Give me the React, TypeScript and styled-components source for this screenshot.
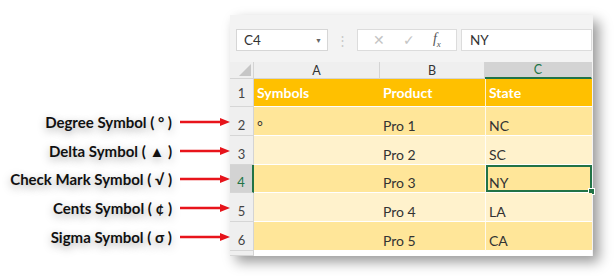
import styled, { createGlobalStyle } from "styled-components";

const GlobalStyle = createGlobalStyle`
  html, body {
    margin: 0;
    padding: 0;
    background: #ffffff;
  }
  body {
    font-family: Lato, "Liberation Sans", sans-serif;
  }
`;

const ROWS = [28, 29, 29, 28, 29, 29];

const labels = [
  "Degree Symbol ( ° )",
  "Delta Symbol ( ▲ )",
  "Check Mark Symbol ( √ )",
  "Cents Symbol ( ¢ )",
  "Sigma Symbol ( σ )",
];

const data = [
  { a: "Symbols", b: "Product", c: "State" },
  { a: "°", b: "Pro 1", c: "NC" },
  { a: "", b: "Pro 2", c: "SC" },
  { a: "", b: "Pro 3", c: "NY" },
  { a: "", b: "Pro 4", c: "LA" },
  { a: "", b: "Pro 5", c: "CA" },
];

function Arrow() {
  return (
    <svg width="50" height="10" viewBox="0 0 50 10">
      <line x1="0" y1="5" x2="42" y2="5" stroke="#e8141b" strokeWidth="2.4" />
      <polygon points="40,1 50,5 40,9" fill="#e8141b" />
    </svg>
  );
}

export default function App() {
  return (
    <Page>
      <GlobalStyle />
      <Labels>
        {labels.map((text, i) => (
          <LabelRow key={text} h={ROWS[i + 1]}>
            <LabelText>{text}</LabelText>
            <Arrow />
          </LabelRow>
        ))}
      </Labels>
      <Window>
        <FormulaBar>
          <NameBox>
            <span>C4</span>
            <Caret>▼</Caret>
          </NameBox>
          <Grip>⋮</Grip>
          <ButtonBox>
            <ToolGlyph>✕</ToolGlyph>
            <ToolGlyph>✓</ToolGlyph>
            <Fx>
              f<sub>x</sub>
            </Fx>
          </ButtonBox>
          <FormulaInput>NY</FormulaInput>
        </FormulaBar>
        <Sheet>
          <Corner>
            <svg width="12" height="12" viewBox="0 0 12 12">
              <polygon points="12,0 12,12 0,12" fill="#c6c6c6" />
            </svg>
          </Corner>
          <ColHeader>A</ColHeader>
          <ColHeader>B</ColHeader>
          <ColHeader active>C</ColHeader>
          {data.map((row, i) => {
            const kind = i === 0 ? "head" : i % 2 === 1 ? "dark" : "light";
            return [
              <RowHeader key={`h${i}`} active={i === 3} head={i === 0}>
                {i + 1}
              </RowHeader>,
              <Cell key={`a${i}`} kind={kind}>
                {row.a}
              </Cell>,
              <Cell key={`b${i}`} kind={kind}>
                {row.b}
              </Cell>,
              <Cell key={`c${i}`} kind={kind} selected={i === 3} divider>
                {row.c}
              </Cell>,
            ];
          })}
          <RowHeader />
          <BlankCell />
          <BlankCell />
          <BlankCell />
        </Sheet>
      </Window>
    </Page>
  );
}

const Page = styled.div`
  display: flex;
  width: 615px;
  height: 276px;
  overflow: hidden;
`;

const Labels = styled.div`
  width: 230px;
  padding-top: 107px;
  display: flex;
  flex-direction: column;
`;

const LabelRow = styled.div<{ h: number }>`
  height: ${(p) => p.h}px;
  display: flex;
  align-items: center;
  justify-content: flex-end;
  gap: 8px;
`;

const LabelText = styled.span`
  font-family: Lato, "Liberation Sans", sans-serif;
  font-weight: 700;
  font-size: 15px;
  color: #111;
  white-space: nowrap;
  text-shadow: 0 3px 8px rgba(0, 0, 0, 0.35);
`;

const Window = styled.div`
  margin-top: 15px;
  width: 363px;
  height: 241px;
  background: #f3f3f3;
  box-shadow: 6px 6px 12px rgba(0, 0, 0, 0.4);
  display: flex;
  flex-direction: column;
`;

const FormulaBar = styled.div`
  display: flex;
  align-items: stretch;
  height: 22px;
  padding: 14px 0 0 6px;
  margin-bottom: 11px;
  font-size: 13.5px;
  color: #333;
`;

const NameBox = styled.div`
  width: 92px;
  box-sizing: border-box;
  background: #fff;
  border: 1px solid #d6d6d6;
  display: flex;
  align-items: center;
  justify-content: space-between;
  padding: 0 5px 0 7px;
`;

const Caret = styled.span`
  font-size: 7px;
  color: #666;
`;

const Grip = styled.div`
  width: 29px;
  display: flex;
  align-items: center;
  justify-content: center;
  color: #c8c8c8;
  font-size: 13px;
`;

const ButtonBox = styled.div`
  width: 100px;
  box-sizing: border-box;
  background: #fff;
  border: 1px solid #dcdcdc;
  display: flex;
  align-items: center;
  justify-content: space-around;
  padding: 0 6px;
`;

const ToolGlyph = styled.span`
  color: #c4c4c4;
  font-size: 14px;
  font-family: "DejaVu Sans", sans-serif;
`;

const Fx = styled.span`
  font-family: "Liberation Serif", serif;
  font-style: italic;
  font-size: 14px;
  color: #555;
  sub {
    font-size: 9px;
  }
`;

const FormulaInput = styled.div`
  margin-left: 4px;
  width: 131px;
  box-sizing: border-box;
  background: #fff;
  border: 1px solid #dcdcdc;
  display: flex;
  align-items: center;
  padding-left: 8px;
`;

const Sheet = styled.div`
  display: grid;
  grid-template-columns: 24px 126px 105px 107px;
  grid-template-rows: 17px ${ROWS.map((r) => `${r}px`).join(" ")} 5px;
  font-size: 14px;
`;

const Corner = styled.div`
  background: #efefef;
  border-bottom: 1px solid #d4d4d4;
  border-right: 1px solid #d4d4d4;
  display: flex;
  align-items: flex-end;
  justify-content: flex-end;
  padding: 0 2px 2px 0;
`;

const ColHeader = styled.div<{ active?: boolean }>`
  background: ${(p) => (p.active ? "#d3d3d3" : "#efefef")};
  border-bottom: ${(p) => (p.active ? "2px solid #217346" : "1px solid #d4d4d4")};
  border-right: 1px solid #d4d4d4;
  display: flex;
  align-items: center;
  justify-content: center;
  font-size: 12.5px;
  color: ${(p) => (p.active ? "#217346" : "#333")};
`;

const RowHeader = styled.div<{ active?: boolean; head?: boolean }>`
  background: ${(p) => (p.active ? "#d3d3d3" : "#efefef")};
  border-bottom: 1px solid #d6d6d6;
  border-right: ${(p) => (p.active ? "2px solid #217346" : "1px solid #d4d4d4")};
  display: flex;
  align-items: ${(p) => (p.head ? "center" : "flex-end")};
  justify-content: center;
  padding-bottom: ${(p) => (p.head ? "0" : "2px")};
  font-size: 13px;
  color: ${(p) => (p.active ? "#217346" : "#444")};
`;

const cellColors = {
  head: "#ffc000",
  dark: "#ffe699",
  light: "#fff2cc",
};

const Cell = styled.div<{
  kind: "head" | "dark" | "light";
  selected?: boolean;
  divider?: boolean;
}>`
  position: relative;
  background: ${(p) => cellColors[p.kind]};
  border-bottom: 1.5px solid #ffffff;
  border-left: ${(p) => (p.divider ? "1px solid rgba(255,255,255,0.8)" : "none")};
  display: flex;
  align-items: ${(p) => (p.kind === "head" ? "center" : "flex-end")};
  padding: 0 3px 1px;
  font-weight: ${(p) => (p.kind === "head" ? 700 : 400)};
  color: ${(p) => (p.kind === "head" ? "#ffffff" : "#333333")};
  box-shadow: ${(p) => (p.selected ? "inset 0 0 0 2px #217346" : "none")};

  &::after {
    content: "";
    display: ${(p) => (p.selected ? "block" : "none")};
    position: absolute;
    right: -3px;
    bottom: -3px;
    width: 5px;
    height: 5px;
    background: #217346;
    border: 1px solid #fff;
  }
`;

const BlankCell = styled.div`
  background: #ffffff;
`;
